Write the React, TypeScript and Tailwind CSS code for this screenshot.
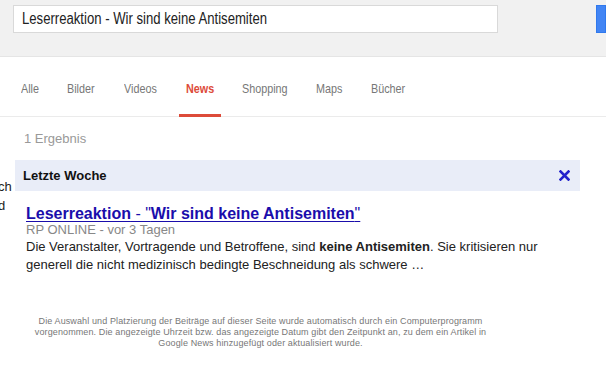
const tabs = [
  { label: "Alle", w: "w-[18px]" },
  { label: "Bilder", w: "w-[29px]" },
  { label: "Videos", w: "w-[34px]" },
  { label: "News", w: "w-[28px]" },
  { label: "Shopping", w: "w-[46px]" },
  { label: "Maps", w: "w-[27px]" },
  { label: "Bücher", w: "w-[35px]" },
];

function CloseIcon() {
  return (
    <svg width="11" height="11" viewBox="0 0 11 11" className="block">
      <path d="M1.5 1.5 L9.5 9.5 M9.5 1.5 L1.5 9.5" stroke="#2222cc" strokeWidth="2.6" strokeLinecap="square" />
    </svg>
  );
}

export default function App() {
  return (
    <div className="w-[606px] h-[367px] overflow-hidden bg-white font-['Liberation_Sans',Arial,sans-serif] text-[#222]">
      {/* search header */}
      <div className="h-[57px] bg-[#f1f1f1] border-b border-[#e5e5e5] flex items-start pt-[5px] pl-[13px]">
        <div className="w-[493px] h-[28px] bg-white border border-[#d9d9d9] flex items-center pl-[8px]">
          <span className="inline-block origin-left scale-x-[0.82] whitespace-nowrap text-[16px] text-[#222]">
            Leserreaktion - Wir sind keine Antisemiten
          </span>
        </div>
        <div className="ml-[98px] w-[10px] h-[28px] bg-[#4285f4] border border-[#3079ed]" />
      </div>

      {/* tabs */}
      <div className="h-[60px] border-b border-[#ebebeb] flex items-stretch pl-[14px] gap-[14px]">
        {tabs.map((t) => (
          <div
            key={t.label}
            className={
              t.label === "News"
                ? "px-[7px] flex items-center pt-[4px] border-b-[3px] border-[#dd4b39] -mb-[1px]"
                : "px-[7px] flex items-center pt-[4px] border-b-[3px] border-transparent -mb-[1px]"
            }
          >
            <div className={`${t.w} whitespace-nowrap`}>
              <span
                className={
                  t.label === "News"
                    ? "inline-block origin-left scale-x-[0.83] text-[13px] font-bold text-[#dd4b39]"
                    : "inline-block origin-left scale-x-[0.83] text-[13px] text-[#777]"
                }
              >
                {t.label}
              </span>
            </div>
          </div>
        ))}
      </div>

      {/* body */}
      <div className="flex">
        <div className="w-[15px] shrink-0 pt-[60px] text-[13px] leading-[19px] text-[#222] overflow-hidden">
          <div className="-ml-[2px] whitespace-nowrap">ch</div>
          <div className="-ml-[2px] whitespace-nowrap">d</div>
        </div>

        <div className="w-[565px] shrink-0">
          <div className="pt-[14px] pl-[9px] text-[13px] leading-[16px] text-[#999]">1 Ergebnis</div>

          <div className="mt-[13px] h-[31px] bg-[#e9edf8] flex items-center justify-between pl-[8px] pr-[10px]">
            <span className="text-[13px] font-bold text-[#111]">Letzte Woche</span>
            <CloseIcon />
          </div>

          <div className="pl-[11px] pt-[14px]">
            <a className="block text-[16px] leading-[18px] text-[#1a0dab] underline decoration-1 underline-offset-2">
              <b>Leserreaktion</b> - "<b>Wir sind keine Antisemiten</b>"
            </a>
            <div className="text-[13px] leading-[14px] text-[#888]">RP ONLINE - vor 3 Tagen</div>
            <div className="text-[13px] leading-[18px] text-[#222] pt-[1px]">
              Die Veranstalter, Vortragende und Betroffene, sind <b>keine Antisemiten</b>. Sie kritisieren nur
              <br />
              generell die nicht medizinisch bedingte Beschneidung als schwere …
            </div>
          </div>

          <div className="w-[491px] mt-[42px] text-center text-[9px] leading-[11px] tracking-[0.12px] text-[#777]">
            Die Auswahl und Platzierung der Beiträge auf dieser Seite wurde automatisch durch ein Computerprogramm
            <br />
            vorgenommen. Die angezeigte Uhrzeit bzw. das angezeigte Datum gibt den Zeitpunkt an, zu dem ein Artikel in
            <br />
            Google News hinzugefügt oder aktualisiert wurde.
          </div>
        </div>
      </div>
    </div>
  );
}
